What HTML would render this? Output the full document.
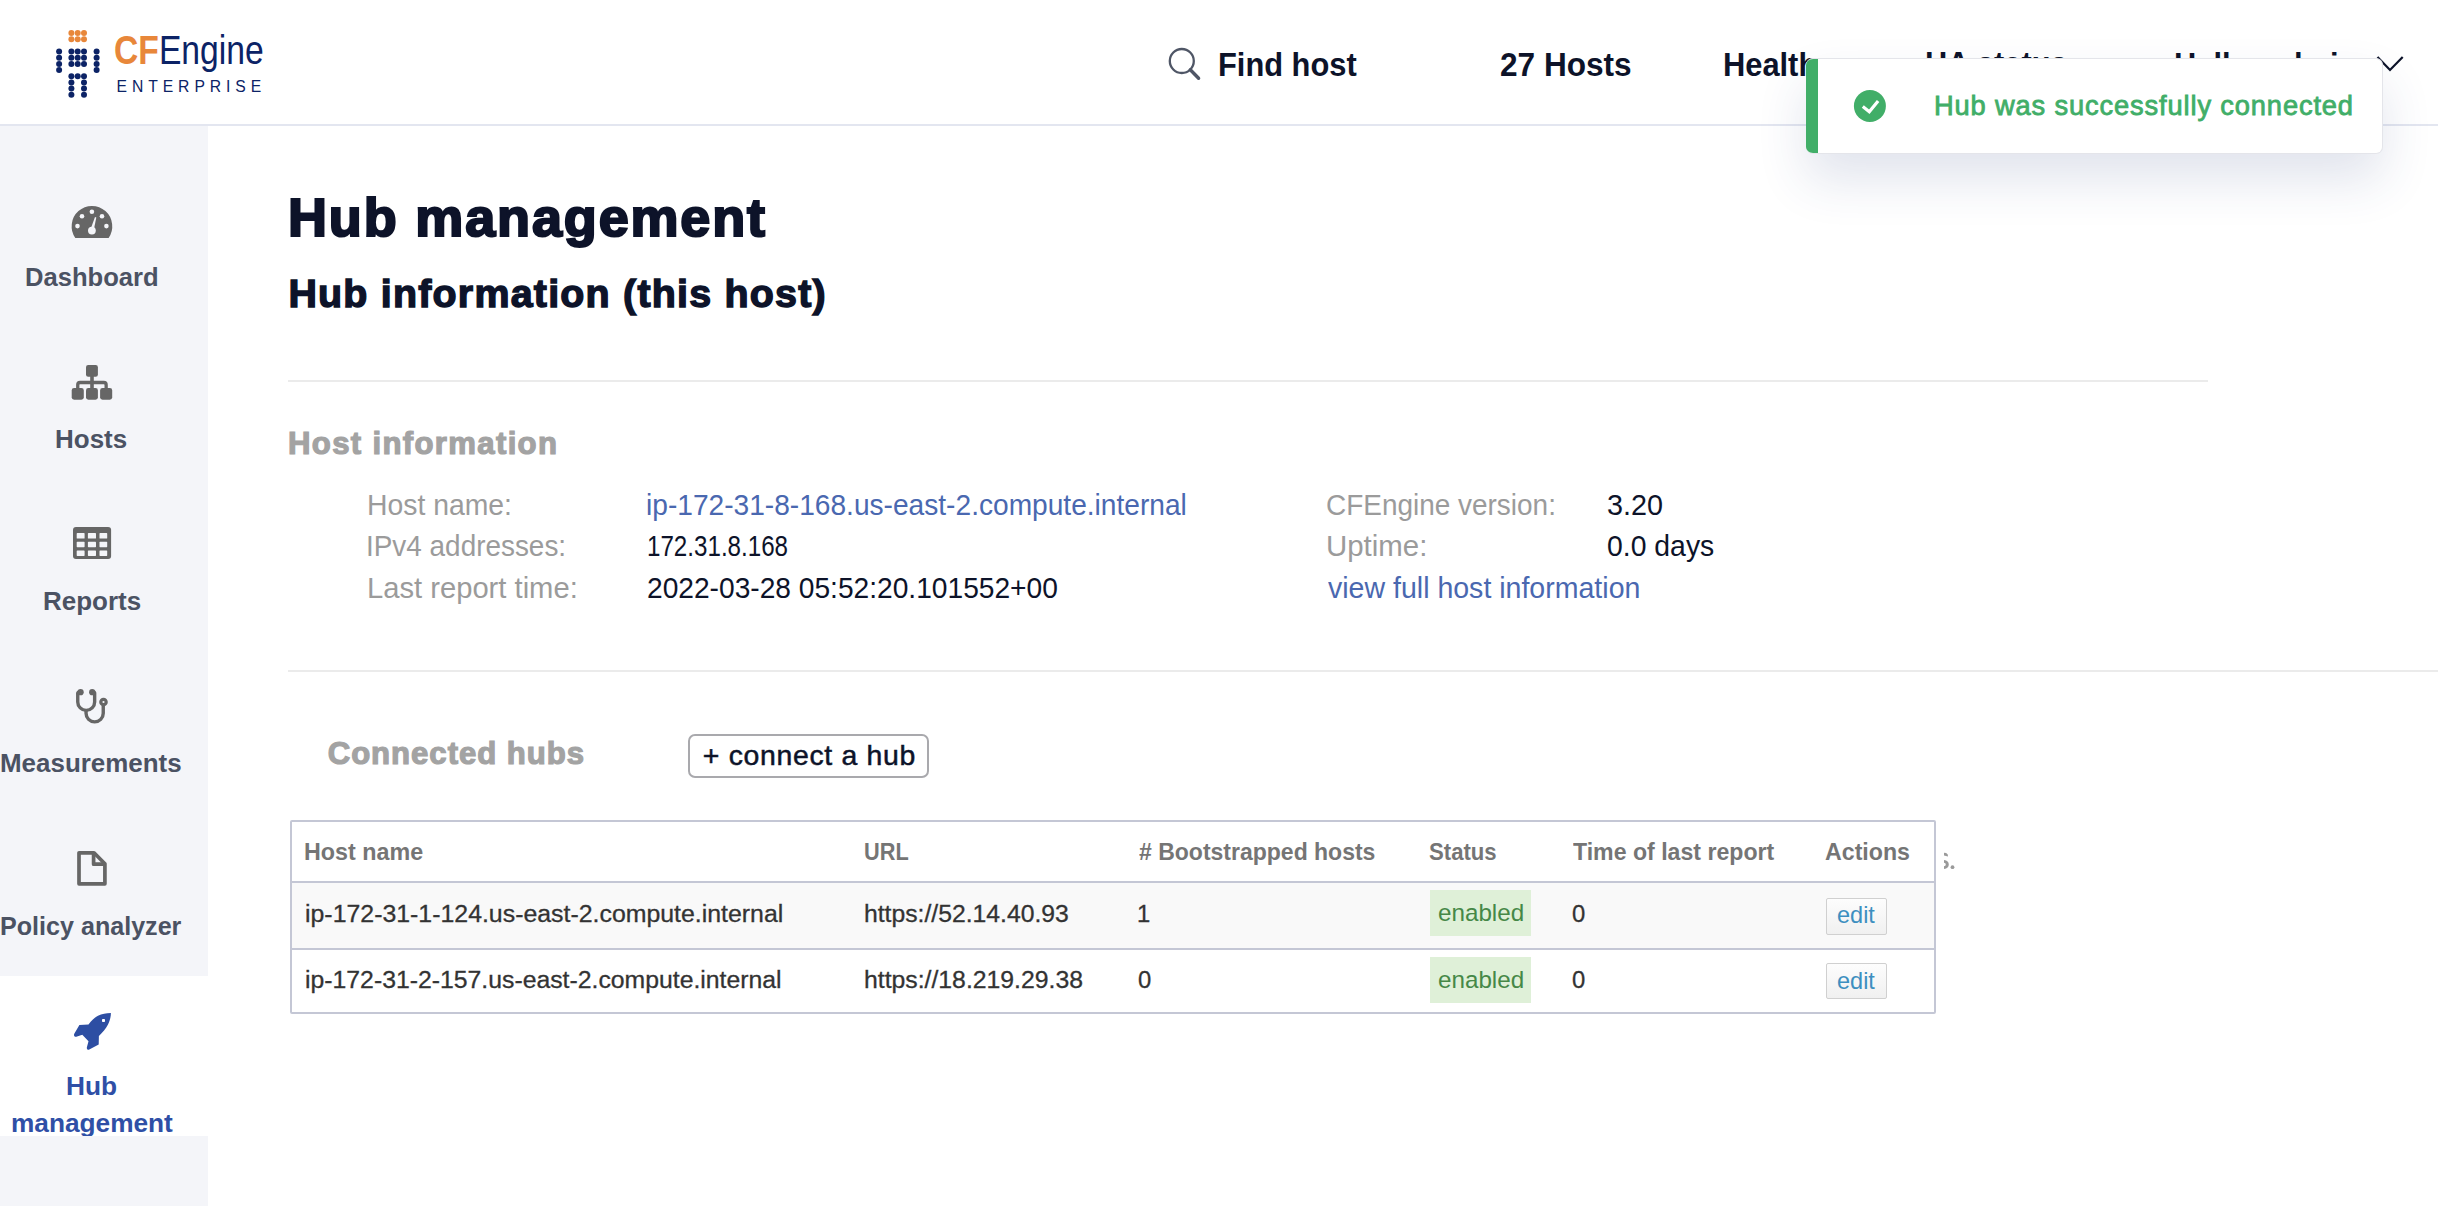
<!DOCTYPE html>
<html><head><meta charset="utf-8"><title>Hub management - CFEngine Enterprise</title>
<style>
html,body{margin:0;padding:0;}
body{width:2438px;height:1206px;overflow:hidden;position:relative;background:#fff;font-family:'Liberation Sans',sans-serif;}
.t{position:absolute;white-space:nowrap;line-height:1;transform-origin:0 0;font-family:'Liberation Sans',sans-serif;}
.bx{position:absolute;box-sizing:border-box;}
</style></head><body>
<!-- header border -->
<div class="bx" style="left:0;top:124px;width:2438px;height:2px;background:#e3e6f0;z-index:1"></div>
<!-- sidebar -->
<div class="bx" style="left:0;top:126px;width:208px;height:1080px;background:#f4f5f9;z-index:0"></div>
<div class="bx" style="left:0;top:976px;width:208px;height:160px;background:#fff;z-index:0"></div>
<!-- hr lines -->
<div class="bx" style="left:288px;top:380px;width:1920px;height:2px;background:#ebebeb"></div>
<div class="bx" style="left:288px;top:670px;width:2150px;height:2px;background:#ebebeb"></div>
<!-- connect button -->
<div class="bx" style="left:688px;top:734px;width:241px;height:44px;border:2px solid #a9a9ad;border-radius:7px;background:#fff;z-index:2"></div>
<!-- table -->
<div class="bx" style="left:290px;top:820px;width:1646px;height:194px;border:2px solid #c4c7d5;border-radius:2px;background:#fff;z-index:1"></div>
<div class="bx" style="left:292px;top:883px;width:1642px;height:65px;background:#f9f9f9;z-index:1"></div>
<div class="bx" style="left:292px;top:881px;width:1642px;height:2px;background:#c4c7d5;z-index:2"></div>
<div class="bx" style="left:292px;top:948px;width:1642px;height:2px;background:#c4c7d5;z-index:2"></div>
<!-- badges -->
<div class="bx" style="left:1430px;top:890px;width:101px;height:46px;background:#dff0d8;z-index:2"></div>
<div class="bx" style="left:1430px;top:957px;width:101px;height:46px;background:#dff0d8;z-index:2"></div>
<!-- edit buttons -->
<div class="bx" style="left:1826px;top:898px;width:61px;height:37px;border:1px solid #d0d0d0;border-radius:2px;background:linear-gradient(#fdfdfd,#f0f0f0);z-index:2"></div>
<div class="bx" style="left:1826px;top:963px;width:61px;height:36px;border:1px solid #d0d0d0;border-radius:2px;background:linear-gradient(#fdfdfd,#f0f0f0);z-index:2"></div>
<!-- icons svg -->
<svg style="position:absolute;left:0;top:0;z-index:3" width="2438" height="1206" viewBox="0 0 2438 1206">
 <!-- logo dots -->
 <g fill="#e8873a">
  <circle cx="71.4" cy="32.9" r="3"/><circle cx="77.7" cy="32.9" r="3"/><circle cx="84" cy="32.9" r="3"/>
  <circle cx="71.4" cy="39.2" r="3"/><circle cx="77.7" cy="39.2" r="3"/><circle cx="84" cy="39.2" r="3"/>
 </g>
 <g fill="#0c2366">
  <circle cx="59.1" cy="51.5" r="3"/><circle cx="59.1" cy="57.7" r="3"/><circle cx="59.1" cy="63.9" r="3"/><circle cx="59.1" cy="70.1" r="3"/>
  <circle cx="96.6" cy="51.5" r="3"/><circle cx="96.6" cy="57.7" r="3"/><circle cx="96.6" cy="63.9" r="3"/><circle cx="96.6" cy="70.1" r="3"/>
  <circle cx="71.4" cy="51.5" r="3"/><circle cx="77.7" cy="51.5" r="3"/><circle cx="84" cy="51.5" r="3"/>
  <circle cx="71.4" cy="57.7" r="3"/><circle cx="77.7" cy="57.7" r="3"/><circle cx="84" cy="57.7" r="3"/>
  <circle cx="71.4" cy="63.9" r="3"/><circle cx="77.7" cy="63.9" r="3"/><circle cx="84" cy="63.9" r="3"/>
  <circle cx="71.4" cy="76.2" r="3"/><circle cx="77.7" cy="76.2" r="3"/><circle cx="84" cy="76.2" r="3"/>
  <circle cx="71.4" cy="82.4" r="3"/><circle cx="84" cy="82.4" r="3"/>
  <circle cx="71.4" cy="88.6" r="3"/><circle cx="84" cy="88.6" r="3"/>
  <circle cx="71.4" cy="94.8" r="3"/><circle cx="84" cy="94.8" r="3"/>
 </g>
 <!-- search icon -->
 <circle cx="1181.8" cy="61" r="12" fill="none" stroke="#4f5666" stroke-width="2.3"/>
 <line x1="1190.3" y1="69.8" x2="1198.6" y2="78.3" stroke="#4f5666" stroke-width="3.4" stroke-linecap="round"/>
 <!-- chevron -->
 <polyline points="2377.5,57 2390,70 2402.7,57" fill="none" stroke="#0d1329" stroke-width="2.2"/>
 <!-- dashboard gauge -->
 <path d="M75.3 237.9 A20.3 20.3 0 1 1 108.6 237.9 Z" fill="#666"/>
 <g fill="#f4f5f9">
  <circle cx="91.9" cy="211.75" r="2.3"/><circle cx="82" cy="216.2" r="2.3"/><circle cx="102" cy="216.2" r="2.3"/>
  <circle cx="77.5" cy="226.1" r="2.3"/><circle cx="106.4" cy="226.1" r="2.3"/>
  <circle cx="91.9" cy="230.6" r="3.9"/>
  <polygon points="90.2,230.2 93.6,230.8 96.3,217.4 95.0,217.0"/>
 </g>
 <!-- hosts sitemap -->
 <g fill="#666">
  <rect x="86" y="365.1" width="11.9" height="11.6" rx="2.2"/>
  <rect x="90.2" y="376" width="3.6" height="12.5"/>
  <rect x="71.7" y="388.1" width="12.1" height="11.6" rx="2.4"/>
  <rect x="86" y="388.1" width="11.9" height="11.6" rx="2.4"/>
  <rect x="100.1" y="388.1" width="12.1" height="11.6" rx="2.4"/>
 </g>
 <path d="M77.75 389 V384.8 a2.3 2.3 0 0 1 2.3 -2.3 H103.85 a2.3 2.3 0 0 1 2.3 2.3 V389" fill="none" stroke="#666" stroke-width="3.3"/>
 <!-- reports table -->
 <rect x="73" y="526.9" width="38.1" height="32.1" rx="3" fill="#666"/>
 <g fill="#f4f5f9">
  <rect x="76.7" y="533.1" width="7.9" height="5.4" rx="0.6"/><rect x="87.9" y="533.1" width="8.1" height="5.4" rx="0.6"/><rect x="99.5" y="533.1" width="7.7" height="5.4" rx="0.6"/>
  <rect x="76.7" y="541.8" width="7.9" height="5.4" rx="0.6"/><rect x="87.9" y="541.8" width="8.1" height="5.4" rx="0.6"/><rect x="99.5" y="541.8" width="7.7" height="5.4" rx="0.6"/>
  <rect x="76.7" y="550.5" width="7.9" height="5.4" rx="0.6"/><rect x="87.9" y="550.5" width="8.1" height="5.4" rx="0.6"/><rect x="99.5" y="550.5" width="7.7" height="5.4" rx="0.6"/>
 </g>
 <!-- stethoscope -->
 <g fill="none" stroke="#666" stroke-width="3.4">
  <path d="M77.75 692.5 V701.9 A8.45 8.45 0 0 0 94.65 701.9 V692.5"/>
  <path d="M86.05 710 V713.3 A8.6 8.6 0 0 0 103.25 713.3 V705.5"/>
  <circle cx="103.5" cy="702" r="2.7" stroke-width="3.2"/>
 </g>
 <g fill="#666"><circle cx="80.6" cy="692.2" r="3.1"/><circle cx="92.2" cy="692.2" r="3.1"/>
  <circle cx="78.6" cy="692.6" r="2.2"/><circle cx="93.9" cy="692.6" r="2.2"/></g>
 <!-- file icon -->
 <g fill="none" stroke="#666" stroke-width="3.7" stroke-linejoin="round">
  <path d="M79 852.8 H94 L104.9 863.8 V883.8 H79 Z"/>
  <path d="M93.6 853 V864.2 H104.9"/>
 </g>
 <!-- rocket -->
 <g transform="translate(62 1004)">
  <path fill="#2d4ea3" d="M48.9 8.9 C44 9 40 9.8 36 11.8 C32.5 13.6 29.5 16.5 26.5 20.6 L17.4 21.1 L12.4 29.6 C11.4 31.5 12.4 33.2 14.3 32.8 L20.3 30.7 L26.5 37.3 L24.9 43.3 C24.5 45.2 25.8 46.2 27.3 45.5 L36.7 40.4 L36.9 31.9 C40.5 28.5 44 24.8 46 20.5 C48.2 15.8 48.9 12 48.9 8.9 Z"/>
  <rect x="40" y="15" width="3" height="3" rx="0.8" fill="#fff"/>
 </g>
 <!-- partial s. glyph right of table -->
 <g fill="#9a9a9a">
  <path d="M1944 852.8 L1946.2 853 Q1948.4 854 1948 856.6 L1944 855.6 Z"/>
  <path d="M1944 860 Q1948.8 860.6 1948.8 864.4 Q1948.8 868.2 1944 868.9 L1944 866.2 Q1945.8 865.8 1945.8 864.4 Q1945.8 863 1944 862.7 Z"/>
  <circle cx="1952.5" cy="867.2" r="1.9"/>
 </g>
</svg>
<!-- toast -->
<div class="bx" style="left:1806px;top:58px;width:577px;height:96px;background:#fff;border:1px solid #e4e5ea;border-left:none;border-radius:7px;box-shadow:0 26px 50px rgba(45,65,125,0.14);z-index:10;overflow:hidden">
 <div style="position:absolute;left:0;top:0;width:12px;height:100%;background:#41ae68"></div>
</div>
<svg style="position:absolute;left:1850px;top:86px;z-index:11" width="40" height="40" viewBox="0 0 40 40">
 <circle cx="19.9" cy="20" r="16" fill="#41ae68"/>
 <polyline points="12.8,20.5 19.3,25.7 28.1,14.9" fill="none" stroke="#fff" stroke-width="3.2" stroke-linejoin="miter"/>
</svg>
<div class="bx" style="left:0;top:1136px;width:208px;height:70px;background:#f4f5f9;z-index:6"></div>
<div class="t" style="left:114.25px;top:30.07px;font-size:40.857px;font-weight:normal;color:#0c2366;z-index:5;transform:scaleX(0.8242);"><span style="color:#e8873a;font-weight:bold">CF</span><span style="color:#0c2366">Engine</span></div>
<div class="t" style="left:116.50px;top:78.64px;font-size:15.714px;font-weight:normal;color:#0c2366;z-index:5;letter-spacing:4.933px;">ENTERPRISE</div>
<div class="t" style="left:1218.13px;top:47.85px;font-size:33.000px;font-weight:bold;color:#0d1329;z-index:5;transform:scaleX(0.9342);">Find host</div>
<div class="t" style="left:1500.24px;top:47.85px;font-size:33.000px;font-weight:bold;color:#0d1329;z-index:5;transform:scaleX(0.9570);">27 Hosts</div>
<div class="t" style="left:1722.93px;top:47.85px;font-size:33.000px;font-weight:bold;color:#0d1329;z-index:5;transform:scaleX(0.9342);">Health</div>
<div class="t" style="left:1925.13px;top:47.15px;font-size:33.000px;font-weight:bold;color:#0d1329;z-index:5;transform:scaleX(0.9342);">HA status</div>
<div class="t" style="left:2173.53px;top:47.85px;font-size:33.000px;font-weight:bold;color:#0d1329;z-index:5;transform:scaleX(0.9342);">Hello, admin</div>
<div class="t" style="left:1934.00px;top:92.31px;font-size:27.286px;font-weight:normal;color:#41ae68;z-index:20;letter-spacing:0.862px;;-webkit-text-stroke:0.8px">Hub was successfully connected</div>
<div class="t" style="left:24.74px;top:263.78px;font-size:26.143px;font-weight:bold;color:#4b5263;z-index:5;transform:scaleX(0.9797);">Dashboard</div>
<div class="t" style="left:55.01px;top:425.78px;font-size:26.143px;font-weight:bold;color:#4b5263;z-index:5;transform:scaleX(0.9943);">Hosts</div>
<div class="t" style="left:42.61px;top:587.78px;font-size:26.143px;font-weight:bold;color:#4b5263;z-index:5;transform:scaleX(0.9938);">Reports</div>
<div class="t" style="left:0.31px;top:750.08px;font-size:26.143px;font-weight:bold;color:#4b5263;z-index:5;transform:scaleX(0.9928);">Measurements</div>
<div class="t" style="left:0.38px;top:912.58px;font-size:26.143px;font-weight:bold;color:#4b5263;z-index:5;transform:scaleX(0.9608);">Policy analyzer</div>
<div class="t" style="left:65.89px;top:1073.38px;font-size:26.143px;font-weight:bold;color:#2f4fa6;z-index:5;transform:scaleX(1.0062);">Hub</div>
<div class="t" style="left:10.59px;top:1110.08px;font-size:26.143px;font-weight:bold;color:#2f4fa6;z-index:5;transform:scaleX(1.0044);">management</div>
<div class="t" style="left:288.00px;top:190.10px;font-size:54.000px;font-weight:bold;color:#0d1329;z-index:5;letter-spacing:1.846px;;-webkit-text-stroke:2.2px">Hub management</div>
<div class="t" style="left:288.40px;top:274.09px;font-size:39.429px;font-weight:bold;color:#0d1329;z-index:5;letter-spacing:1.215px;;-webkit-text-stroke:1.4px">Hub information (this host)</div>
<div class="t" style="left:288.00px;top:427.93px;font-size:31.143px;font-weight:bold;color:#a3a3a3;z-index:5;letter-spacing:1.333px;;-webkit-text-stroke:1.2px">Host information</div>
<div class="t" style="left:366.85px;top:490.63px;font-size:29.143px;font-weight:normal;color:#9b9b9b;z-index:5;transform:scaleX(0.9736);">Host name:</div>
<div class="t" style="left:365.93px;top:531.93px;font-size:29.143px;font-weight:normal;color:#9b9b9b;z-index:5;transform:scaleX(0.9581);">IPv4 addresses:</div>
<div class="t" style="left:366.80px;top:573.73px;font-size:29.143px;font-weight:normal;color:#9b9b9b;z-index:5;transform:scaleX(1.0015);">Last report time:</div>
<div class="t" style="left:646.27px;top:490.63px;font-size:29.143px;font-weight:normal;color:#4a68b0;z-index:5;transform:scaleX(0.9655);">ip-172-31-8-168.us-east-2.compute.internal</div>
<div class="t" style="left:646.54px;top:531.93px;font-size:29.143px;font-weight:normal;color:#0d1329;z-index:5;transform:scaleX(0.8293);">172.31.8.168</div>
<div class="t" style="left:647.23px;top:573.73px;font-size:29.143px;font-weight:normal;color:#0d1329;z-index:5;transform:scaleX(0.9664);">2022-03-28 05:52:20.101552+00</div>
<div class="t" style="left:1326.08px;top:490.63px;font-size:29.143px;font-weight:normal;color:#9b9b9b;z-index:5;transform:scaleX(0.9596);">CFEngine version:</div>
<div class="t" style="left:1325.98px;top:531.93px;font-size:29.143px;font-weight:normal;color:#9b9b9b;z-index:5;transform:scaleX(1.0104);">Uptime:</div>
<div class="t" style="left:1328.00px;top:573.73px;font-size:29.143px;font-weight:normal;color:#4a68b0;z-index:5;transform:scaleX(0.9795);">view full host information</div>
<div class="t" style="left:1607.01px;top:490.63px;font-size:29.143px;font-weight:normal;color:#0d1329;z-index:5;transform:scaleX(0.9873);">3.20</div>
<div class="t" style="left:1607.03px;top:531.93px;font-size:29.143px;font-weight:normal;color:#0d1329;z-index:5;transform:scaleX(0.9741);">0.0 days</div>
<div class="t" style="left:327.70px;top:737.93px;font-size:31.143px;font-weight:bold;color:#a3a3a3;z-index:5;letter-spacing:0.969px;;-webkit-text-stroke:1.2px">Connected hubs</div>
<div class="t" style="left:702.80px;top:740.59px;font-size:28.429px;font-weight:normal;color:#0d1329;z-index:3;letter-spacing:0.686px;;-webkit-text-stroke:0.5px">+ connect a hub</div>
<div class="t" style="left:303.88px;top:839.86px;font-size:24.286px;font-weight:bold;color:#757575;z-index:5;transform:scaleX(0.9603);">Host name</div>
<div class="t" style="left:863.90px;top:839.86px;font-size:24.286px;font-weight:bold;color:#757575;z-index:5;transform:scaleX(0.8958);">URL</div>
<div class="t" style="left:1139.00px;top:839.86px;font-size:24.286px;font-weight:bold;color:#757575;z-index:5;transform:scaleX(0.9478);"># Bootstrapped hosts</div>
<div class="t" style="left:1429.39px;top:839.86px;font-size:24.286px;font-weight:bold;color:#757575;z-index:5;transform:scaleX(0.9125);">Status</div>
<div class="t" style="left:1573.00px;top:839.86px;font-size:24.286px;font-weight:bold;color:#757575;z-index:5;transform:scaleX(0.9526);">Time of last report</div>
<div class="t" style="left:1824.64px;top:839.86px;font-size:24.286px;font-weight:bold;color:#757575;z-index:5;transform:scaleX(0.9552);">Actions</div>
<div class="t" style="left:304.76px;top:901.57px;font-size:23.857px;font-weight:normal;color:#333333;z-index:5;transform:scaleX(1.0430);;-webkit-text-stroke:0.3px">ip-172-31-1-124.us-east-2.compute.internal</div>
<div class="t" style="left:863.76px;top:901.57px;font-size:23.857px;font-weight:normal;color:#333333;z-index:5;transform:scaleX(1.0367);;-webkit-text-stroke:0.3px">https://52.14.40.93</div>
<div class="t" style="left:1137.00px;top:901.57px;font-size:23.857px;font-weight:normal;color:#333333;z-index:5;;-webkit-text-stroke:0.3px">1</div>
<div class="t" style="left:1572.00px;top:901.57px;font-size:23.857px;font-weight:normal;color:#333333;z-index:5;;-webkit-text-stroke:0.3px">0</div>
<div class="t" style="left:304.76px;top:967.77px;font-size:23.857px;font-weight:normal;color:#333333;z-index:5;transform:scaleX(1.0393);;-webkit-text-stroke:0.3px">ip-172-31-2-157.us-east-2.compute.internal</div>
<div class="t" style="left:863.76px;top:967.77px;font-size:23.857px;font-weight:normal;color:#333333;z-index:5;transform:scaleX(1.0388);;-webkit-text-stroke:0.3px">https://18.219.29.38</div>
<div class="t" style="left:1138.00px;top:967.77px;font-size:23.857px;font-weight:normal;color:#333333;z-index:5;;-webkit-text-stroke:0.3px">0</div>
<div class="t" style="left:1572.00px;top:967.77px;font-size:23.857px;font-weight:normal;color:#333333;z-index:5;;-webkit-text-stroke:0.3px">0</div>
<div class="t" style="left:1437.60px;top:901.36px;font-size:24.286px;font-weight:normal;color:#468847;z-index:3;transform:scaleX(0.9976);">enabled</div>
<div class="t" style="left:1437.60px;top:967.56px;font-size:24.286px;font-weight:normal;color:#468847;z-index:3;transform:scaleX(0.9976);">enabled</div>
<div class="t" style="left:1836.63px;top:903.06px;font-size:24.286px;font-weight:normal;color:#3d8fc0;z-index:3;transform:scaleX(0.9684);">edit</div>
<div class="t" style="left:1836.63px;top:968.76px;font-size:24.286px;font-weight:normal;color:#3d8fc0;z-index:3;transform:scaleX(0.9684);">edit</div>
</body></html>
